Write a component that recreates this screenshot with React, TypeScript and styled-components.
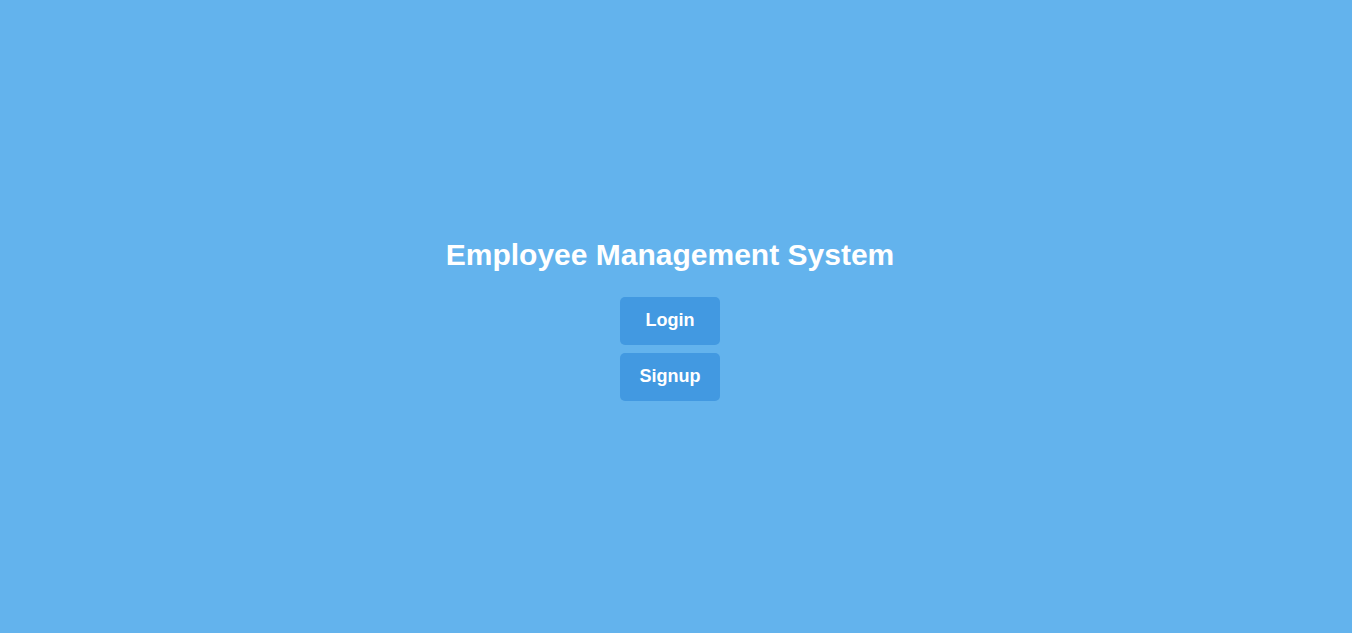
import React from "react";
import styled, { createGlobalStyle } from "styled-components";

const GlobalStyle = createGlobalStyle`
  html, body { margin: 0; padding: 0; }
  body { background: #63b3ed; font-family: "Liberation Sans", Arial, sans-serif; }
`;

const Page = styled.div`
  box-sizing: border-box;
  min-height: 100vh;
  padding: 5px 12px 0 0;
  display: flex;
  flex-direction: column;
  align-items: center;
  justify-content: center;
  background: #63b3ed;
`;

const Title = styled.h1`
  margin: 0 0 25px;
  font-size: 30px;
  font-weight: 700;
  color: #ffffff;
`;

const Actions = styled.div`
  display: flex;
  flex-direction: column;
  gap: 8px;
`;

const Button = styled.button`
  width: 100px;
  height: 48px;
  border: none;
  border-radius: 5px;
  background: #4299e1;
  color: #ffffff;
  font-family: "Liberation Sans", Arial, sans-serif;
  font-size: 18px;
  font-weight: 700;
  cursor: pointer;
`;

export default function App() {
  return (
    <>
      <GlobalStyle />
      <Page>
        <Title>Employee Management System</Title>
        <Actions>
          <Button>Login</Button>
          <Button>Signup</Button>
        </Actions>
      </Page>
    </>
  );
}
